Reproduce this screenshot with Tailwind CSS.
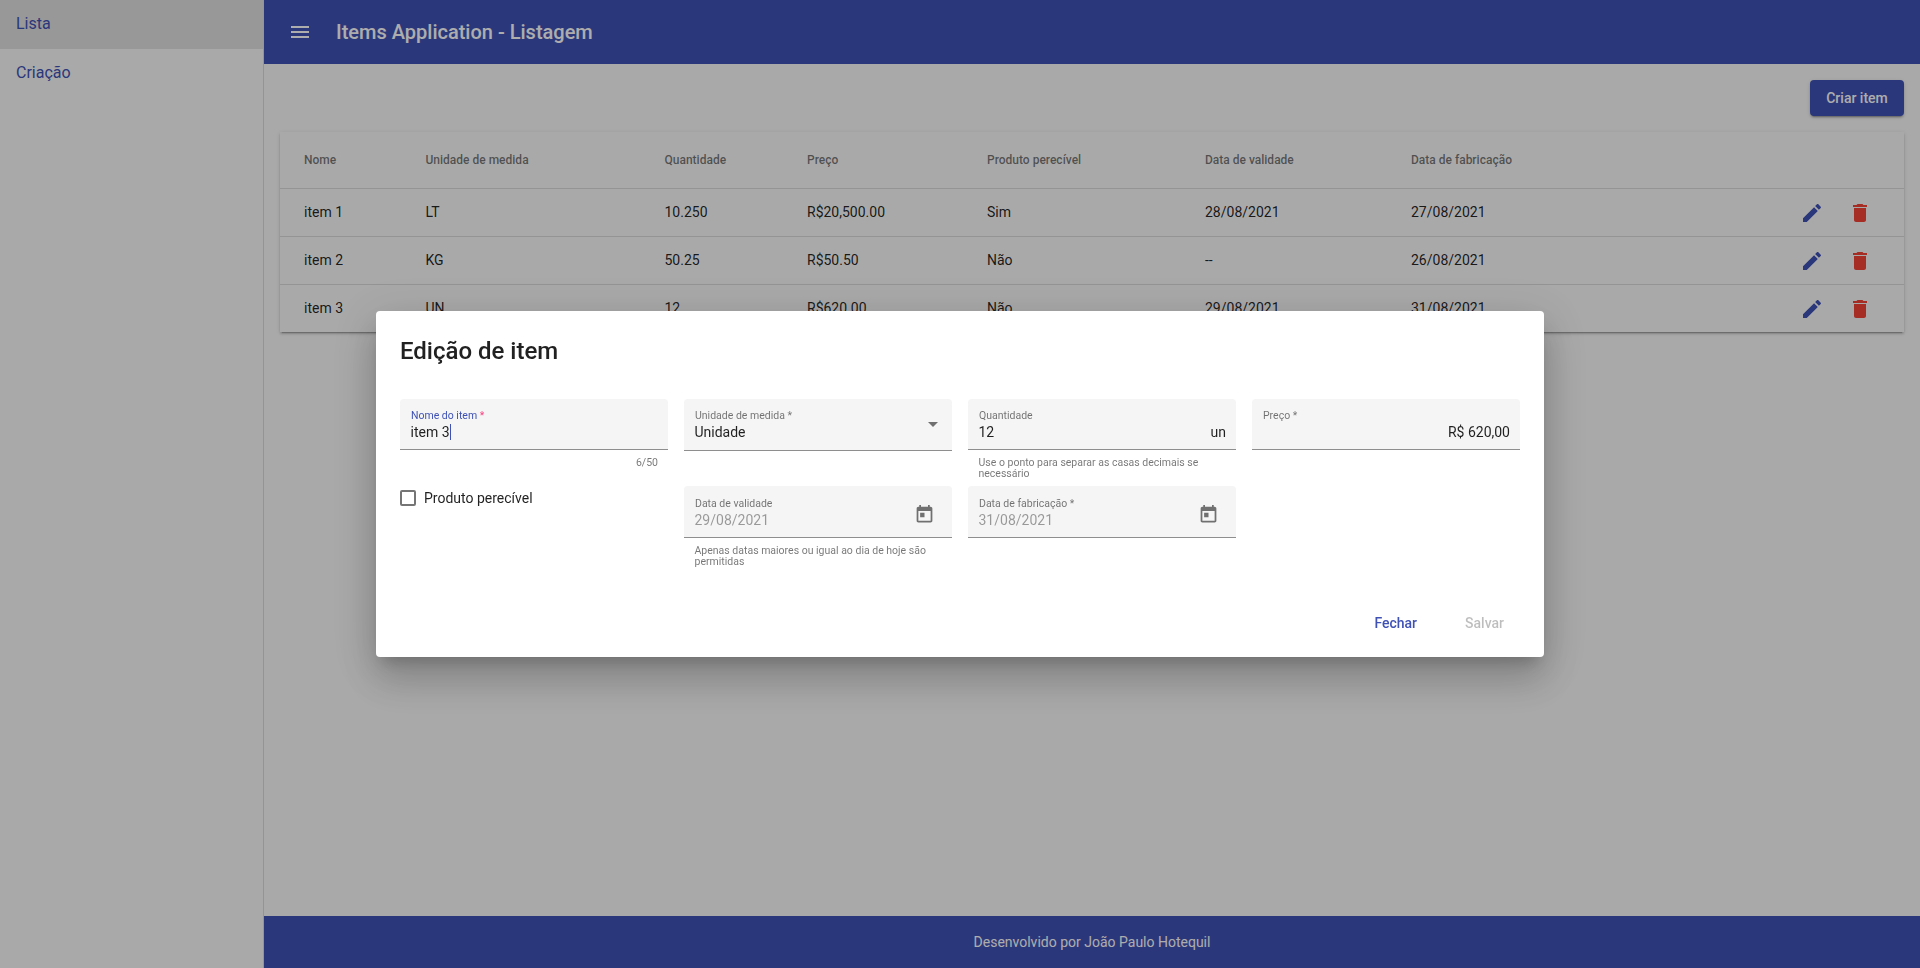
<!DOCTYPE html>
<html lang="en">
<head>
  <meta charset="UTF-8" />
  <meta name="viewport" content="width=device-width, initial-scale=1.0" />
  <title>Items Application</title>
  <script src="https://cdn.jsdelivr.net/npm/@tailwindcss/browser@4"></script>
</head>
<body class="font-[family-name:Roboto,sans-serif] text-sm text-black/87 bg-[#fafafa] overflow-hidden">
  <div class="flex h-[968px]">
    <aside class="w-[264px] shrink-0 border-r border-black/12 text-base text-[#3f51b5]">
      <div class="h-[49px] pl-4 flex items-center bg-black/10 pb-[2px]">Lista</div>
      <div class="h-[49px] pl-4 flex items-center pb-[2px]">Criação</div>
    </aside>
    <main class="flex-1 flex flex-col min-w-0">
      <header class="h-16 shrink-0 bg-[#3f51b5] text-white flex items-center pl-6">
        <svg class="w-6 h-6 fill-current" viewBox="0 0 24 24"><path d="M3 18h18v-2H3v2zm0-5h18v-2H3v2zm0-7v2h18V6H3z"/></svg>
        <span class="ml-6 text-xl font-medium">Items Application - Listagem</span>
      </header>
      <div class="flex-1 px-4 pt-4">
        <div class="flex justify-end">
          <button class="h-9 w-[94px] rounded bg-[#3f51b5] text-white font-medium shadow-[0_3px_1px_-2px_rgba(0,0,0,.2),0_2px_2px_0_rgba(0,0,0,.14),0_1px_5px_0_rgba(0,0,0,.12)]">Criar item</button>
        </div>
        <table class="mt-4 w-full table-fixed bg-[#fafafa] shadow-[0_3px_1px_-2px_rgba(0,0,0,.2),0_2px_2px_0_rgba(0,0,0,.14),0_1px_5px_0_rgba(0,0,0,.12)]">
          <thead>
            <tr class="h-[56px] text-left text-xs font-medium text-black/54 border-b border-black/12">
              <th class="w-[145.5px] pl-6 font-medium">Nome</th>
              <th class="w-[239px] font-medium">Unidade de medida</th>
              <th class="w-[142.5px] font-medium">Quantidade</th>
              <th class="w-[180px] font-medium">Preço</th>
              <th class="w-[218px] font-medium">Produto perecível</th>
              <th class="w-[206px] font-medium">Data de validade</th>
              <th class="font-medium">Data de fabricação</th>
              <th class="w-[112px]"></th>
            </tr>
          </thead>
          <tbody>
            <tr class="h-12 border-b border-black/12">
              <td class="pl-6">item 1</td><td>LT</td><td>10.250</td><td>R$20,500.00</td><td>Sim</td><td>28/08/2021</td><td>27/08/2021</td>
              <td>
                <div class="flex gap-2 mt-[2px]">
                  <span class="w-10 h-10 flex items-center justify-center text-[#3f51b5]"><svg class="w-6 h-6 fill-current" viewBox="0 0 24 24"><path d="M3 17.25V21h3.75L17.81 9.94l-3.75-3.75L3 17.25zM20.71 7.04c.39-.39.39-1.02 0-1.41l-2.34-2.34c-.39-.39-1.02-.39-1.41 0l-1.83 1.83 3.75 3.75 1.83-1.83z"/></svg></span>
                  <span class="w-10 h-10 flex items-center justify-center text-[#f44336]"><svg class="w-6 h-6 fill-current" viewBox="0 0 24 24"><path d="M6 19c0 1.1.9 2 2 2h8c1.1 0 2-.9 2-2V7H6v12zM19 4h-3.5l-1-1h-5l-1 1H5v2h14V4z"/></svg></span>
                </div>
              </td>
            </tr>
            <tr class="h-12 border-b border-black/12">
              <td class="pl-6">item 2</td><td>KG</td><td>50.25</td><td>R$50.50</td><td>Não</td><td>--</td><td>26/08/2021</td>
              <td>
                <div class="flex gap-2 mt-[2px]">
                  <span class="w-10 h-10 flex items-center justify-center text-[#3f51b5]"><svg class="w-6 h-6 fill-current" viewBox="0 0 24 24"><path d="M3 17.25V21h3.75L17.81 9.94l-3.75-3.75L3 17.25zM20.71 7.04c.39-.39.39-1.02 0-1.41l-2.34-2.34c-.39-.39-1.02-.39-1.41 0l-1.83 1.83 3.75 3.75 1.83-1.83z"/></svg></span>
                  <span class="w-10 h-10 flex items-center justify-center text-[#f44336]"><svg class="w-6 h-6 fill-current" viewBox="0 0 24 24"><path d="M6 19c0 1.1.9 2 2 2h8c1.1 0 2-.9 2-2V7H6v12zM19 4h-3.5l-1-1h-5l-1 1H5v2h14V4z"/></svg></span>
                </div>
              </td>
            </tr>
            <tr class="h-12">
              <td class="pl-6">item 3</td><td>UN</td><td>12</td><td>R$620.00</td><td>Não</td><td>29/08/2021</td><td>31/08/2021</td>
              <td>
                <div class="flex gap-2 mt-[2px]">
                  <span class="w-10 h-10 flex items-center justify-center text-[#3f51b5]"><svg class="w-6 h-6 fill-current" viewBox="0 0 24 24"><path d="M3 17.25V21h3.75L17.81 9.94l-3.75-3.75L3 17.25zM20.71 7.04c.39-.39.39-1.02 0-1.41l-2.34-2.34c-.39-.39-1.02-.39-1.41 0l-1.83 1.83 3.75 3.75 1.83-1.83z"/></svg></span>
                  <span class="w-10 h-10 flex items-center justify-center text-[#f44336]"><svg class="w-6 h-6 fill-current" viewBox="0 0 24 24"><path d="M6 19c0 1.1.9 2 2 2h8c1.1 0 2-.9 2-2V7H6v12zM19 4h-3.5l-1-1h-5l-1 1H5v2h14V4z"/></svg></span>
                </div>
              </td>
            </tr>
          </tbody>
        </table>
      </div>
      <footer class="h-[52px] shrink-0 bg-[#3f51b5] text-white flex items-center justify-center">Desenvolvido por João Paulo Hotequil</footer>
    </main>
  </div>

  <div class="fixed inset-0 bg-black/32 flex items-center justify-center">
    <div class="w-[1168px] h-[346px] rounded bg-white p-6 pb-4 flex flex-col shadow-[0_11px_15px_-7px_rgba(0,0,0,.2),0_24px_38px_3px_rgba(0,0,0,.14),0_9px_46px_8px_rgba(0,0,0,.12)]">
      <h2 class="text-2xl leading-8 font-medium mb-8 text-[#212121]">Edição de item</h2>
      <div class="grid grid-cols-4 gap-x-4 grid-rows-[87px_1fr] flex-1">
        <div>
          <div class="h-[51px] rounded-t bg-[#f5f5f5] border-b border-black/42 pl-[11px] pr-[10px] pt-[11px]">
            <div class="text-[10.5px] leading-3 text-[#3f51b5]">Nome do item <span class="text-[#ff4081]">*</span></div>
            <div class="leading-[20px] ml-[-0.5px] flex items-center">item 3<span class="w-px h-[16px] bg-[#3f51b5]"></span></div>
          </div>
          <div class="text-[10.5px] leading-[11px] text-black/54 text-right pr-[10px] pt-[7px]">6/50</div>
        </div>
        <div>
          <div class="h-[52px] rounded-t bg-[#f5f5f5] border-b border-black/42 pl-[11px] pr-[10px] pt-[11px] flex justify-between">
            <div>
              <div class="text-[10.5px] leading-3 text-black/54">Unidade de medida *</div>
              <div class="leading-[20px] ml-[-0.5px]">Unidade</div>
            </div>
            <span class="mt-[12px] mr-[4px] w-0 h-0 border-x-[5px] border-x-transparent border-t-[5px] border-t-black/54"></span>
          </div>
        </div>
        <div>
          <div class="h-[51px] rounded-t bg-[#f5f5f5] border-b border-black/42 pl-[11px] pr-[10px] pt-[11px]">
            <div class="text-[10.5px] leading-3 text-black/54">Quantidade</div>
            <div class="leading-[20px] ml-[-0.5px] flex justify-between"><span>12</span><span>un</span></div>
          </div>
          <div class="text-[10.5px] leading-[11px] text-black/54 pl-[10.5px] pr-[10px] pt-[7px]">Use o ponto para separar as casas decimais se necessário</div>
        </div>
        <div>
          <div class="h-[51px] rounded-t bg-[#f5f5f5] border-b border-black/42 pl-[11px] pr-[10px] pt-[11px]">
            <div class="text-[10.5px] leading-3 text-black/54">Preço *</div>
            <div class="leading-[20px] text-right">R$ 620,00</div>
          </div>
        </div>
        <label class="flex items-center gap-2 h-6 self-start">
          <span class="w-4 h-4 rounded-[2px] border-2 border-black/54"></span>
          <span>Produto perecível</span>
        </label>
        <div>
          <div class="h-[52px] rounded-t bg-[#f5f5f5] border-b border-black/42 pl-[11px] pr-[17px] pt-[12px] flex justify-between">
            <div>
              <div class="text-[10.5px] leading-3 text-black/54">Data de validade</div>
              <div class="leading-[20px] ml-[-0.5px] text-black/38">29/08/2021</div>
            </div>
            <svg class="w-[21px] h-[21px] mt-[6px] fill-black/54" viewBox="0 0 24 24"><path d="M19 3h-1V1h-2v2H8V1H6v2H5c-1.11 0-1.99.9-1.99 2L3 19c0 1.1.89 2 2 2h14c1.1 0 2-.9 2-2V5c0-1.1-.9-2-2-2zm0 16H5V8h14v11zM7 10h5v5H7z"/></svg>
          </div>
          <div class="text-[10.5px] leading-[11px] text-black/54 pl-[10.5px] pr-[10px] pt-[7px]">Apenas datas maiores ou igual ao dia de hoje são permitidas</div>
        </div>
        <div>
          <div class="h-[52px] rounded-t bg-[#f5f5f5] border-b border-black/42 pl-[11px] pr-[17px] pt-[12px] flex justify-between">
            <div>
              <div class="text-[10.5px] leading-3 text-black/54">Data de fabricação *</div>
              <div class="leading-[20px] ml-[-0.5px] text-black/38">31/08/2021</div>
            </div>
            <svg class="w-[21px] h-[21px] mt-[6px] fill-black/54" viewBox="0 0 24 24"><path d="M19 3h-1V1h-2v2H8V1H6v2H5c-1.11 0-1.99.9-1.99 2L3 19c0 1.1.89 2 2 2h14c1.1 0 2-.9 2-2V5c0-1.1-.9-2-2-2zm0 16H5V8h14v11zM7 10h5v5H7z"/></svg>
          </div>
        </div>
      </div>
      <div class="flex justify-end gap-4 font-medium">
        <button class="h-9 px-4 text-[#3f51b5]">Fechar</button>
        <button class="h-9 px-4 text-black/26">Salvar</button>
      </div>
    </div>
  </div>
</body>
</html>
